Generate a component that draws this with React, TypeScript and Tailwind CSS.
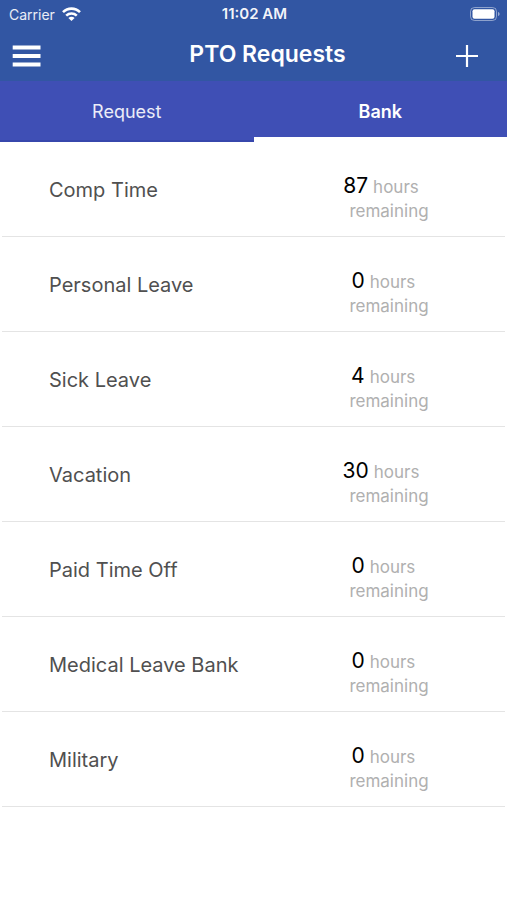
import { useState } from "react"

const TABS = ["Request", "Bank"]

const BALANCES = [
  { name: "Comp Time", hours: 87 },
  { name: "Personal Leave", hours: 0 },
  { name: "Sick Leave", hours: 4 },
  { name: "Vacation", hours: 30 },
  { name: "Paid Time Off", hours: 0 },
  { name: "Medical Leave Bank", hours: 0 },
  { name: "Military", hours: 0 },
]

function WifiIcon() {
  return (
    <svg width="19" height="14" viewBox="0 0 19 14" fill="none" stroke="white" strokeWidth="2.6" aria-hidden="true">
      <path d="M1 5.2C5.8 0.4 13.2 0.4 18 5.2" />
      <path d="M4.2 8.6C7.2 5.8 11.8 5.8 14.8 8.6" />
      <path d="M9.5 14L6.4 10.9C8.1 9.3 10.9 9.3 12.6 10.9Z" fill="white" stroke="none" />
    </svg>
  )
}

function BatteryIcon() {
  return (
    <svg width="30" height="14" viewBox="0 0 30 14" fill="none" aria-hidden="true">
      <rect x="0.5" y="0.5" width="26" height="13" rx="4" stroke="white" strokeOpacity="0.45" />
      <rect x="2.5" y="2.3" width="22" height="9.4" rx="2" fill="white" />
      <path d="M28 5V9C29 8.6 29.6 7.9 29.6 7C29.6 6.1 29 5.4 28 5Z" fill="white" fillOpacity="0.5" />
    </svg>
  )
}

function StatusBar() {
  return (
    <div className="grid grid-cols-3 items-center h-7 pl-[9px] pr-[7px] text-[14px]">
      <div className="flex items-center gap-[7px] text-white/90">
        Carrier
        <WifiIcon />
      </div>
      <div className="text-center text-[15px] font-semibold text-white/95">11:02 AM</div>
      <div className="flex justify-end">
        <BatteryIcon />
      </div>
    </div>
  )
}

export default function App() {
  const [tab, setTab] = useState("Bank")

  return (
    <main className="min-h-screen bg-white font-['Inter',sans-serif]">
      <header className="bg-[#3256a3] text-white">
        <StatusBar />
        <div className="flex items-center justify-between h-[53px] px-3">
          <button aria-label="Menu" className="w-17 pt-[2px]">
            <svg width="29" height="22" viewBox="0 0 29 22" fill="white" aria-hidden="true">
              <path d="M0.7 0.5H28.5V4.5H0.7ZM0.7 9H28.5V13H0.7ZM0.7 17.5H28.5V21.5H0.7Z" />
            </svg>
          </button>
          <h1 className="text-[23px] font-semibold">PTO Requests</h1>
          <button aria-label="New request" className="flex justify-center w-10 pt-[2px] pr-4">
            <svg width="22" height="22" viewBox="0 0 22 22" stroke="white" strokeWidth="2.2" aria-hidden="true">
              <path d="M11 0V22M0 11H22" />
            </svg>
          </button>
        </div>
      </header>

      <nav className="grid grid-cols-2 h-[61px] bg-[#3f4fb5] text-white text-[18px]">
        {TABS.map(t => (
          <button
            key={t}
            onClick={() => setTab(t)}
            className={
              t === tab
                ? "pt-1 border-b-[5px] border-white font-semibold"
                : "pt-[2px] border-b-2 border-[#3747ac] text-white/90"
            }
          >
            {t}
          </button>
        ))}
      </nav>

      <ul className="px-[2px]">
        {BALANCES.map(b => (
          <li key={b.name} className="flex h-[95px] border-b border-[#e4e4e4] pl-[47px]">
            <span className="flex-1 pt-[33px] text-[20px] leading-[30px] text-[#505050]">{b.name}</span>
            <div className="w-[250px] pt-8 pl-[2px] text-center text-[17px] leading-6 text-[#b0b0b0]">
              <p>
                <span className="inline-block min-w-[18px] mr-[5px] text-right text-[21px] text-black">{b.hours}</span>
                hours
              </p>
              <p className="pl-4">remaining</p>
            </div>
          </li>
        ))}
      </ul>
    </main>
  )
}
